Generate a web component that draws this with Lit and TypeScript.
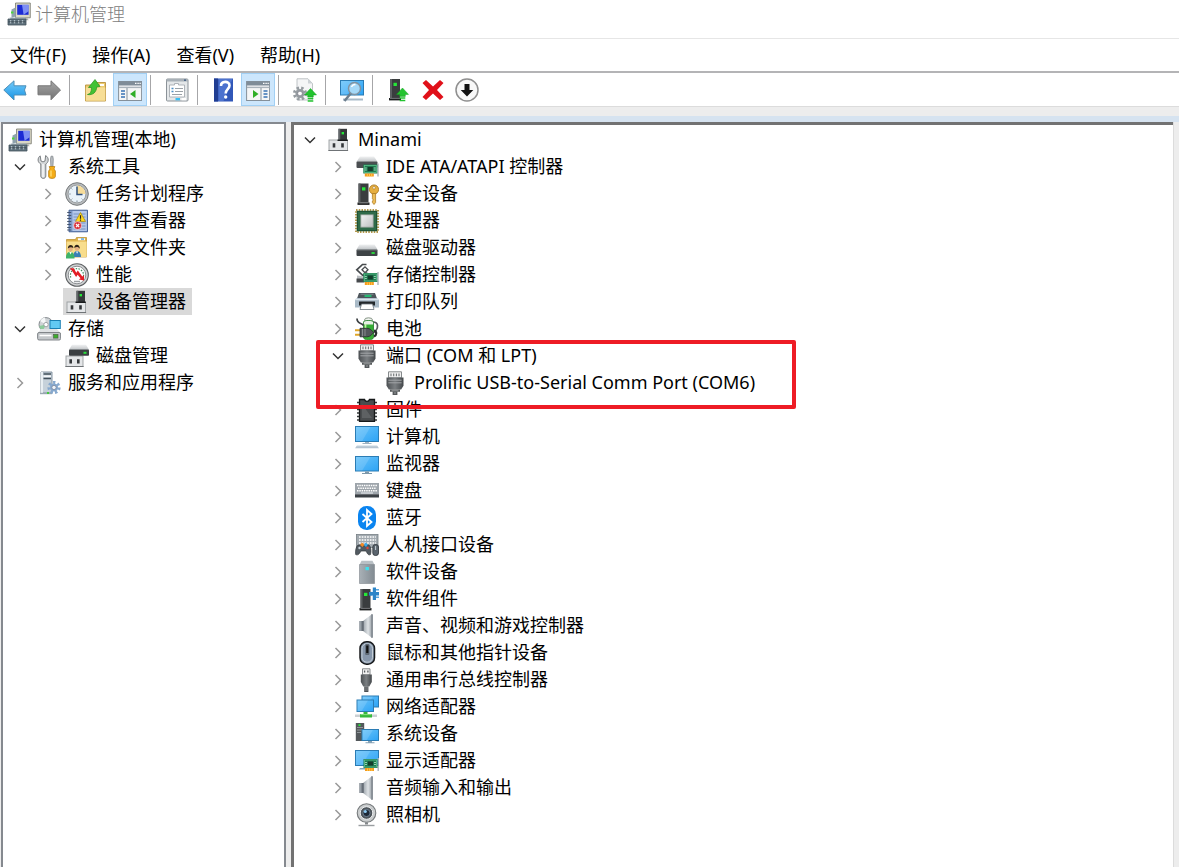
import { LitElement, html, svg, css, nothing } from "lit";
import type { TemplateResult } from "lit";
import { customElement, state } from "lit/decorators.js";
import { classMap } from "lit/directives/class-map.js";

interface TreeNode {
  label: string;
  icon: string;
  open?: boolean;
  selected?: boolean;
  marked?: boolean;
  expandable?: boolean;
  children?: TreeNode[];
}

/* ---------- shared icon parts ---------- */

const screen = (x: number, y: number, w: number, h: number) => svg`
  <rect x=${x} y=${y} width=${w} height=${h} fill="#2b7cb4"/>
  <rect x=${x + 1} y=${y + 1} width=${w - 2} height=${h - 2} fill="url(#sky)"/>
  <path d="M${x + 1} ${y + 1}h${w * 0.6}L${x + w * 0.3} ${y + h - 1}H${x + 1}z" fill="#fff" opacity=".14"/>`;

const board = (x: number, y: number) => svg`
  <path d="M${x + 14} ${y - 1}h1.4v13h-1.4z" fill="#aab4bb"/>
  <rect x=${x} y=${y} width="14" height="9" fill="#1f7a50"/>
  <rect x=${x + 1} y=${y + 1} width="12" height="7" fill="none" stroke="#5cc28c" stroke-width=".8"/>
  <rect x=${x + 4.5} y=${y + 2.5} width="5" height="4" fill="#143c2c"/>
  <path d="M${x + 1.5} ${y + 3.5}h2M${x + 1.5} ${y + 5.5}h2M${x + 10.5} ${y + 3.5}h2M${x + 10.5} ${y + 5.5}h2" stroke="#b5e6c9" stroke-width=".8"/>
  <path d="M${x + 1.5} ${y + 9}h9v3h-9z" fill="#f59a1b"/>
  <path d="M${x + 4} ${y + 9.5}v2.5M${x + 6.2} ${y + 9.5}v2.5M${x + 8.4} ${y + 9.5}v2.5" stroke="#ffd45c" stroke-width=".8"/>`;

const tower = (x: number, y: number) => svg`
  <path d="M${x + 1} ${y}h10v19H${x + 1}z" fill="#3a3d3f"/>
  <path d="M${x + 1} ${y}h2v19h-2z" fill="#5c6062"/>
  <path d="M${x} ${y + 19}h12v2.4H${x}z" fill="#1c1e1f"/>
  <path d="M${x + 1} ${y + 19.4}h10" stroke="#8d9193" stroke-width=".8"/>
  <rect x=${x + 4.5} y=${y + 3.8} width="3.4" height="3.2" fill="#25e838"/>`;

const disk = (y: number) => svg`
  <path d="M4.5 ${y}h15l3 5h-21z" fill="url(#silver)"/>
  <rect x="1.5" y=${y + 5} width="21" height="6.4" rx="1" fill="#3e4346"/>
  <path d="M1.8 ${y + 5.4}h20.4" stroke="#85898c" stroke-width=".9"/>
  <rect x="16.5" y=${y + 7.6} width="3.2" height="1.8" fill="#29e23c"/>`;

const bracket = (x: number, y: number, w: number, h: number) => svg`
  <rect x=${x} y=${y} width=${w} height=${h} fill="#e4e6e8" stroke="#9a9ea1" stroke-width=".9"/>
  <path d="M${x + w * 0.2} ${y + 3.2}h2.6v4.4h-2.6zM${x + w * 0.8 - 2.6} ${y + 3.2}h2.6v4.4h-2.6z" fill="#34373a"/>
  <path d="M${x - 0.6} ${y + h}h${w + 1.2}" stroke="#6f7376" stroke-width="1"/>`;

const serial = svg`
  <path d="M5.5 .8h13v6h-13z" fill="#f1f1f1" stroke="#85898b" stroke-width="1"/>
  <path d="M8 2.6v2.6M10.7 2.6v2.6M13.4 2.6v2.6M16 2.6v2.6" stroke="#707476" stroke-width="1.1"/>
  <path d="M3.5 6.4h17v8.4l-2.4 3.8H5.9l-2.4-3.8z" fill="url(#dark)"/>
  <path d="M5.4 9.2h13.2M5.4 11.8h13.2" stroke="#a3a6a8" stroke-width="1"/>
  <path d="M7 18.6h10v2.2H7zM9.6 20.8h4.8V24H9.6z" fill="#54585a"/>
  <path d="M8.6 19.8h6.8M11 22h2" stroke="#adb0b2" stroke-width=".8"/>`;

const greenArrow = (x: number, y: number) => svg`
  <path d="M${x} ${y}l6 6.4h-3.2v2H${x - 2.8}v-2H${x - 6}z" fill="#23c32f" stroke="#13a31f" stroke-width=".5"/>
  <path d="M${x - 2.8} ${y + 10}h5.6M${x - 2.8} ${y + 12.4}h5.6" stroke="#23c32f" stroke-width="1.5"/>`;

const gear = (x: number, y: number, r: number, fill: string, hole: string) => svg`
  <circle cx=${x} cy=${y} r=${r} fill="none" stroke=${fill} stroke-width="3.2" stroke-dasharray="2.3 2.1"/>
  <circle cx=${x} cy=${y} r=${r - 1} fill=${fill}/>
  <circle cx=${x} cy=${y} r=${r * 0.42} fill=${hole} stroke="#667" stroke-width=".5"/>`;

const speaker = svg`
  <path d="M4.5 7h4.5v10H4.500z" fill="#6a737b"/>
  <path d="M4.5 7h2v10h-2z" fill="#99a1a8"/>
  <path d="M8 7L16.500 .5v23L8 17z" fill="url(#cone)"/>
  <path d="M16 .3h2v23.400h-2z" fill="#8b9299"/>
  <path d="M8.300 7v10" stroke="#59616a" stroke-width=".8"/>`;

const computer = svg`
  <path d="M8.5 1h14.8v14.8H8.5z" fill="#d9d7c5" stroke="#77786f" stroke-width=".8"/>
  <path d="M10.2 2.8h11.4v10H10.2z" fill="#1c2bd4"/>
  <path d="M15 2.8h6.6v6.4l-5 3.6z" fill="#9fb2ff" opacity=".75"/>
  <path d="M4.5 7.5l4-2v9l-4 1.5z" fill="#8fa2ad"/>
  <path d="M4 9.5h2.4v2H4z" fill="#4bd63c"/>
  <path d="M9.5 15.8h10.6l1.6 2.4H8z" fill="#b6b8ae"/>
  <path d="M2.5 15.5h15l3 2H4z" fill="#a9bac3"/>
  <path d="M1 17h18v6H1z" fill="#60727d" stroke="#43525b" stroke-width=".8"/>
  <path d="M3.6 18.2v3M7.5 18.2v3M11.6 18.2v3M15.5 18.2v3" stroke="#c9d6dd" stroke-width="1.3"/>
  <path d="M1.4 19.8h17" stroke="#33414a" stroke-width=".8"/>`;

const windowFrame = svg`
  <rect x=".6" y="3.5" width="23" height="19" fill="#f5f6f7" stroke="#85909a" stroke-width="1"/>
  <path d="M.6 3.5h23v4H.6z" fill="#7f8c98"/>
  <path d="M17 5.4h1.5M19.4 5.4h1.4M21.5 5.4h1.3" stroke="#fff" stroke-width="1.3"/>
  <path d="M1 9.4h22.4" stroke="#aab3bb" stroke-width="1.4"/>`;

/* ---------- icons, all on a 24 by 24 grid ---------- */

const icons: Record<string, TemplateResult> = {
  computer,
  tools: svg`
    <path d="M3.200 .9L4 6l2 .9L8 6l.6-5.400c1.900 1 2.800 2.800 2.600 4.700-.2 1.800-1.200 3-2.400 3.700v12c0 3.200-5 3.200-5 0V9C2.400 8.300 1.200 7 1.100 5.200 1 3.400 1.800 1.700 3.200 .9z" fill="#d4d7d9" stroke="#6e7376" stroke-width=".9"/>
    <path d="M6 9v13" stroke="#fff" stroke-width="1.200"/>
    <path d="M14 1.200h1.800l.5 3-.4 8h-2l-.4-8z" fill="#b8bcc0" stroke="#7d8286" stroke-width=".7"/>
    <path d="M12.200 11.500h5.600l-.8 2.500 1.400 2v5.500c0 2.600-6.800 2.600-6.800 0V16l1.400-2z" fill="#f5ad18" stroke="#b67808" stroke-width=".7"/>
    <path d="M14 15.500v6" stroke="#ffe07a" stroke-width="1.300"/>`,
  clock: svg`
    <circle cx="12" cy="12" r="11.300" fill="#b8bbbd" stroke="#74787a" stroke-width="1"/>
    <circle cx="12" cy="12" r="8.900" fill="#eaf3fa" stroke="#8b8f92" stroke-width=".8"/>
    <path d="M12 12V3.600A8.400 8.400 0 0 1 20.400 12z" fill="#f6dc9a"/>
    <path d="M12 4.500V12.500H17.500" fill="none" stroke="#31517c" stroke-width="1.500"/>
    <path d="M12 18.500v1.500M4.200 12h1.500M6.500 6.500l.8.8M6.500 17.500l.8-.8M17.500 17.500l-.8-.8" stroke="#7e8a94" stroke-width="1"/>`,
  eventlog: svg`
    <path d="M4 1.200h18.500v21.600H4z" fill="#7f9ac9" stroke="#3c5a92" stroke-width=".9"/>
    <path d="M7.500 2h14.300v20H7.500z" fill="#b5c8ea"/>
    <path d="M8.500 5h12M8.500 8h12M8.500 11h12M8.500 14h12M8.500 17h12M8.500 20h12" stroke="#6885bb" stroke-width=".8"/>
    <path d="M2.200 3.500h4M2.200 6.500h4M2.200 9.500h4M2.200 12.500h4M2.200 15.500h4M2.200 18.500h4M2.200 21h4" stroke="#44546e" stroke-width="1.200"/>
    <path d="M15.500 3.500l5 9h-10z" fill="#ffd91f" stroke="#ab8600" stroke-width=".7"/>
    <path d="M15.500 6.300v3.400M15.500 10.400v1.300" stroke="#222" stroke-width="1.200"/>
    <circle cx="12.600" cy="16.600" r="4" fill="#d8303a" stroke="#fff" stroke-width=".6"/>
    <path d="M11 15l3.200 3.200M14.200 15L11 18.200" stroke="#fff" stroke-width="1.200"/>`,
  sharedfolder: svg`
    <path d="M1.500 3.500h9l1-2h10V21h-20z" fill="#dfb24a" stroke="#b98a25" stroke-width=".7"/>
    <path d="M1.500 5.500h20.200V21H1.500z" fill="#f8dd8c"/>
    <path d="M13 2.300h7v2h-7z" fill="#fff"/><path d="M16 2.300h3v1.500h-3z" fill="#5aa6e0"/>
    <circle cx="5.500" cy="13" r="2.400" fill="#e5b184"/><path d="M2.800 12.500c0-4.500 5.600-4.500 5.600-.3-1.500-1.200-3.600-1.200-5.600.3z" fill="#2d2218"/>
    <circle cx="12" cy="12.500" r="2.400" fill="#e5b184"/><path d="M9.300 12c0-4.500 5.600-4.500 5.600 1-1.500-2.500-3.600-2.500-5.600-1z" fill="#2d2218"/>
    <path d="M8 21c0-8 8-8 8 0z" fill="#3a7fb5"/>
    <path d="M1 21c.3-7 8-7 8.500 0v1.500H1z" fill="#3fb36a"/>
    <path d="M4.300 16l1.200 2.600L6.800 16zM11 15.500l1.100 2.300 1.100-2.300z" fill="#fff"/>`,
  performance: svg`
    <circle cx="12" cy="12" r="11.300" fill="#cfd1d2" stroke="#5e6163" stroke-width="1.100"/>
    <circle cx="12" cy="12" r="8.800" fill="#fff" stroke="#8b8f92" stroke-width="1"/>
    <path d="M5.800 14.500A6.600 6.600 0 1 1 18.200 14.500" fill="none" stroke="#3f8f5e" stroke-width="1.200" stroke-dasharray="1.500 1.300"/>
    <path d="M4.800 5.200h4l2.500 4.500 1.500-2.200 4.500 6 1.700-1.200v5.200l-5.200-.9 1.700-1.400-2.900-3.400-1.500 2.200L7.200 8z" fill="#e31e25"/>
    <path d="M9 18.500h6" stroke="#9da1a4" stroke-width="1.400"/>`,
  devmgr: svg`
    ${bracket(2, 12, 18.500, 10.500)}
    <path d="M11.500 .8h8.500V12h-8.500z" fill="#35383a"/>
    <path d="M11.500 .8h1.800V12h-1.800z" fill="#63676a"/>
    <rect x="14.600" y="4" width="2.400" height="2.400" fill="#25e838"/>
    <path d="M10.500 12.300h10.300" stroke="#191b1c" stroke-width="1.400"/>`,
  storage: svg`
    <circle cx="9" cy="7.600" r="7" fill="#cfd3d6" stroke="#7b8084" stroke-width=".9"/>
    <path d="M9 7.600L3 4a7 7 0 0 1 5-3.400z" fill="#f5f7f8"/><path d="M9 7.600L2.200 9a7 7 0 0 0 3.600 4.800z" fill="#8ccb9b"/>
    <circle cx="9" cy="7.600" r="2.200" fill="#fff" stroke="#8d9296" stroke-width=".8"/>
    <rect x="12.500" y="3" width="11.300" height="9" fill="#1a7fb3"/><rect x="13.500" y="4" width="9.300" height="7" fill="#62c9f3"/>
    <path d="M4 12h16l3.500 4H.8z" fill="#dfe2e4"/>
    <rect x=".6" y="15.500" width="23" height="7.500" rx="1.500" fill="#c3c7ca" stroke="#777c80" stroke-width=".9"/>
    <path d="M2.500 18.500h12" stroke="#fff" stroke-width="1.500"/>
    <rect x="16.500" y="17.300" width="4.500" height="3.800" fill="#3cae2e" stroke="#4d5c49" stroke-width=".6"/>`,
  diskmgmt: svg`
    ${bracket(1, 12, 17, 10.500)}
    <path d="M7 .8h14l3 5H4z" fill="url(#silver)"/>
    <rect x="4" y="5.600" width="20" height="6.200" rx=".8" fill="#3b3f42"/>
    <rect x="18.500" y="7.800" width="3" height="2" fill="#29e23c"/>`,
  services: svg`
    <path d="M4 1h11v21H4z" fill="#c6d1da" stroke="#7b8b98" stroke-width=".9"/>
    <path d="M4 1h2v21H4z" fill="#e9eff3"/>
    <path d="M6.500 3h7.500M6.500 7.500h7.500" stroke="#42505b" stroke-width="1.300"/>
    <path d="M6.500 5.200h7.500" stroke="#fff" stroke-width="1.300"/>
    <path d="M3 22.500h12" stroke="#9aa7b1" stroke-width="1.400"/>
    <rect x="10" y="21" width="2" height="2" fill="#46c840"/>
    ${gear(17, 16.500, 5, "#87a9ce", "#eef4fa")}`,
  ide: svg`
    <path d="M5 1.600h14l3.500 5.200h-21z" fill="url(#silver)"/>
    <rect x="1.500" y="6.500" width="21" height="6.500" rx="1" fill="#4a4e51"/>
    ${board(8.300, 9.500)}`,
  security: svg`
    ${tower(2.500, 1.500)}
    <circle cx="19" cy="7.500" r="4.600" fill="#e6ae3f" stroke="#a5721a" stroke-width=".8"/>
    <circle cx="19" cy="5.800" r="1.300" fill="#fff" stroke="#a5721a" stroke-width=".6"/>
    <path d="M17.400 11.500h3.200v9l-1.600 2-1.600-2v-1.500l1-1-1-1.200v-1.500z" fill="#edbc55" stroke="#a5721a" stroke-width=".7"/>`,
  cpu: svg`
    <rect x="1" y="1" width="22" height="22" fill="none" stroke="#b5974a" stroke-width="2" stroke-dasharray="1.500 1.250"/>
    <rect x="1.800" y="1.800" width="20.400" height="20.400" fill="#2f6b49"/>
    <rect x="2.400" y="2.400" width="19.200" height="19.200" fill="none" stroke="#1f5135" stroke-width="1"/>
    <rect x="5.800" y="5.800" width="12.400" height="12.400" fill="url(#chip)" stroke="#8a9a90" stroke-width=".8"/>`,
  disk: disk(8.500),
  storagectl: svg`
    <path d="M11.500 1.500H7.500L1.800 6.800l5.700 5.400h4v-3" fill="none" stroke="#474b4e" stroke-width="1.700"/>
    <path d="M7 6.800l3-3 3 3-3 3z" fill="#fff" stroke="#474b4e" stroke-width="1.300"/>
    <path d="M2 12.500l8 1v4H2z" fill="#b9bdc0"/><path d="M1.500 15.500h8v4h-8z" fill="#45494c"/>
    ${board(8.300, 10)}`,
  printer: svg`
    <path d="M4 3h16l2 5.500H2z" fill="#4d555b"/><path d="M5.500 4.300h13" stroke="#747d84" stroke-width="1.300"/>
    <rect x="9.500" y="4.800" width="7" height="2.200" fill="#28b772"/>
    <path d="M2 8h20l2 2v7.500H0V10z" fill="#a9bac7"/>
    <path d="M.3 9.500h23.400" stroke="#dbe5ec" stroke-width="1.400"/>
    <path d="M4 11.500h16v4H4z" fill="#23272a"/>
    <path d="M6.500 14h11l1.500 5.500H5z" fill="#fff" stroke="#6b747b" stroke-width=".8"/>`,
  battery: svg`
    <path d="M18 5c6 0 5 6 3 8.500l-3 3" fill="none" stroke="#565b5f" stroke-width="1.700"/>
    <path d="M19 13.500c3 1 3 4.500 0 6" fill="none" stroke="#292c2e" stroke-width="2.200"/>
    <ellipse cx="13.500" cy="3" rx="4" ry="2.200" fill="#f0f4ef" stroke="#7a8a7a" stroke-width=".9"/>
    <path d="M8.500 5c0-2 10-2 10 0v15.500c0 3-10 3-10 0z" fill="#35ad35" stroke="#23782c" stroke-width=".8"/>
    <path d="M8.900 5c0-1.500 9.200-1.500 9.200 0v2.500H8.900z" fill="#e8efe6"/>
    <path d="M10.500 7v5" stroke="#c0f4a4" stroke-width="1.700"/>
    <path d="M2 1.500c0 6 5 4 6.500 7" fill="none" stroke="#3b3f42" stroke-width="1.700"/>
    <path d="M0 13.300h5.500M0 17.800h5.500" stroke="#e0a62a" stroke-width="2"/>
    <path d="M5 11.300h6.500c4.500 0 5.500 3 7 4.200-1.500 1.300-2.500 4.300-7 4.300H5z" fill="#52575a" stroke="#282b2d" stroke-width=".8"/>
    <path d="M7.500 12v7M10 12v7" stroke="#8c9194" stroke-width=".9"/>`,
  port: serial,
  firmware: svg`
    <path d="M2 4.500h20M2 8h20M2 11.500h20M2 15h20M2 18.500h20M2 22h20" stroke="#34383a" stroke-width="1.600"/>
    <path d="M4.500 1.500h5c.6 2.600 4.400 2.600 5 0h5v22h-15z" fill="#4a4d4f" stroke="#161819" stroke-width="1.300"/>
    <path d="M7 6l10 14H7z" fill="#6c7072" opacity=".6"/>`,
  pc: svg`
    ${screen(0, 1, 24, 16)}
    <path d="M10 17h4v1.300h-4zM7.500 18h9v1h-9z" fill="#9fb3c2"/>
    <path d="M2 20.500h20l2 2.800H0z" fill="#b5c4d1"/><path d="M2 20.700h20" stroke="#e4ecf2" stroke-width="1"/>`,
  monitor: svg`
    ${screen(0, 4, 24, 15.500)}
    <path d="M10 19.500h4v1.600h-4zM7 21h10v1H7z" fill="#7e98aa"/>`,
  keyboard: svg`
    <rect x="0" y="4" width="24" height="11.500" fill="#9ea5ab"/>
    <path d="M0 15.300h24v3.200H0z" fill="#3b4045"/>
    <path d="M2 6.500h20M3 9.200h18.500M2 11.800h20" stroke="#fff" stroke-width="1.400" stroke-dasharray="1.500 .8"/>
    <path d="M6 14h12" stroke="#e6eaed" stroke-width="1.100"/>`,
  bluetooth: svg`
    <rect x="3" y="0" width="18" height="24" rx="8.500" fill="#0a84f0"/>
    <path d="M7.500 8l9 8-4.500 4V4l4.500 4-9 8" fill="none" stroke="#fff" stroke-width="1.800"/>`,
  hid: svg`
    <rect x="1.500" y="1.500" width="21.500" height="13" fill="#a2aab0" stroke="#777f86" stroke-width=".8"/>
    <path d="M4 4h17M4 7h17M4 10h17" stroke="#fff" stroke-width="1.600" stroke-dasharray="1.700 1"/>
    <path d="M3 12h4c1.500 1 3 1 4.500 0h2.500c2 2 2.500 6 1.500 9.500-2.500 1.500-3.500-2-4.500-3.500H6c-1 1.500-2.500 5-5.300 3.500C.2 18 .8 14 3 12z" fill="#525a61" stroke="#30363b" stroke-width=".7"/>
    <circle cx="4.500" cy="15" r="1.200" fill="#c6d0d7"/>
    <path d="M7 9.500l2.500 2-2 2.500-2.500-2z" fill="#f28a24"/><path d="M10.500 9.500l2.500 2-2 2.500-2-2z" fill="#36a9ec"/><circle cx="12.500" cy="15" r="1.200" fill="#de4638"/>
    <rect x="17.800" y="11.500" width="5.700" height="11" rx="2.500" fill="#5b656e" stroke="#2c3237" stroke-width=".8"/>
    <path d="M20.600 13v4" stroke="#c6d0d7" stroke-width="1"/>`,
  softdev: svg`
    <path d="M6.500 .8h11l2 4H4.500z" fill="#b9c0c5"/>
    <path d="M4.500 4.500h15v19h-15z" fill="url(#steel)" stroke="#7f878d" stroke-width=".6"/>
    <rect x="10.500" y="7" width="3.400" height="3.200" fill="#3fe0ee"/>`,
  softcomp: svg`
    ${tower(4.500, 2)}
    <path d="M17.800 .5h3.200V5h3v3.500h-3V13h-3.200V8.500h-3.800V5h3.800z" fill="#2d85c8"/>
    <circle cx="16" cy="6.700" r="1.900" fill="#2d85c8"/><path d="M21 2h3v1.500h-3zM21 9.500h3V11h-3z" fill="#5aa5dc"/>`,
  speaker,
  mouse: svg`
    <rect x="5" y=".8" width="14.500" height="22.400" rx="6.500" fill="#8797ab" stroke="#17191b" stroke-width="1.500"/>
    <rect x="7" y="2.800" width="10.500" height="18.400" rx="4.800" fill="none" stroke="#c4ced7" stroke-width="1"/>
    <rect x="10.200" y="3" width="4.200" height="11" rx="1" fill="#5c6772"/>
    <rect x="11.200" y="4.500" width="2.200" height="7.500" fill="#111"/>`,
  usb: svg`
    <path d="M7.500 .8h7.500v6H7.500z" fill="#f2f2f2" stroke="#777b7e" stroke-width=".9"/>
    <path d="M9.600 2.600v2M12.900 2.600v2" stroke="#55595c" stroke-width="1.300"/>
    <path d="M5.800 6.500h11v7.500l-2.500 4.500H8.300L5.800 14z" fill="url(#dark)"/>
    <path d="M9.200 18.500h4.200V24H9.200z" fill="#4b4f52"/><path d="M9.500 20h3.600M9.500 22h3.600" stroke="#999da0" stroke-width=".8"/>`,
  network: svg`
    ${screen(6.500, 0.500, 17.500, 12)}
    ${screen(1.500, 4.500, 17.500, 12.500)}
    <path d="M0 19.500h22v2.500H0z" fill="#cbd0d3"/>
    <path d="M8.500 17h4v2h-4zM5 19h12v3.500H5z" fill="#35b83c"/><path d="M5.500 19.600h11" stroke="#86e07e" stroke-width="1"/>`,
  system: svg`
    <path d="M.8 1h8.400v18H.8z" fill="#53585b"/><path d="M2 5.500h6M2 8h6M2 10.500h4" stroke="#90969a" stroke-width="1"/>
    <rect x="3.500" y="2.200" width="2" height="1.800" fill="#28e83a"/>
    ${screen(6.500, 7, 17.500, 12)}
    <path d="M13 19h4v1.500h-4zM10.500 20.300h9v1h-9z" fill="#86a2b6"/>`,
  display: svg`
    ${screen(0, 1, 24, 16)}
    <path d="M5 19h5v1.500H4z" fill="#86a2b6"/>
    ${board(8.500, 10)}`,
  camera: svg`
    <circle cx="11.500" cy="10" r="9.300" fill="#c9cccd" stroke="#75797b" stroke-width="1.100"/>
    <circle cx="11.500" cy="10" r="6.300" fill="#4d545a" stroke="#eceeef" stroke-width="1"/>
    <circle cx="11.500" cy="10" r="3.600" fill="#1d2937" stroke="#7b8ea2" stroke-width=".8"/>
    <circle cx="10.300" cy="8.600" r="1.500" fill="#8ccaf2"/>
    <path d="M10 19.300h3v2.200h-3z" fill="#83878a"/><path d="M3.500 22.500h16" stroke="#999da0" stroke-width="1.400"/>`,

  back: svg`<path d="M.8 12L11 2.800v5h12l-1.500 4.200 1.500 5H11v5z" fill="url(#blueArrow)" stroke="#4f8fb8" stroke-width="1"/>`,
  forward: svg`<path d="M23.500 12L14 2.800v5H1v9h13v5z" fill="url(#grayArrow)" stroke="#777" stroke-width="1"/>`,
  up: svg`
    <path d="M1.500 7h8l1.500-2.500h10.500V23h-20z" fill="#edcb72" stroke="#b9923c" stroke-width=".9"/>
    <path d="M1.800 9.500h19.500V22.700H1.800z" fill="#f7de96"/><path d="M16 6h4v2h-4z" fill="#fff"/>
    <path d="M3.500 16.500c3-.5 4-3 4-7H4.500L11 1.500l5 7-3.300.5C12.500 14 9 17.500 3.500 16.500z" fill="#42c234" stroke="#279420" stroke-width=".7"/>`,
  treepane: svg`
    ${windowFrame}
    <path d="M9 10v12.500" stroke="#85909a" stroke-width="1"/>
    <path d="M3 13h4M3 16h4M3 19h4" stroke="#3973b5" stroke-width="1.500"/>
    <path d="M17.500 12v8L12 16z" fill="#2fae27"/>`,
  actionpane: svg`
    ${windowFrame}
    <path d="M15 10v12.500" stroke="#85909a" stroke-width="1"/>
    <path d="M17.500 13h4M17.500 16h4M17.500 19h4" stroke="#3973b5" stroke-width="1.500"/>
    <path d="M7 12v8l5.500-4z" fill="#2fae27"/>`,
  properties: svg`
    <rect x="1.500" y="1" width="21.500" height="22" rx="1" fill="#e4e7e9" stroke="#8b9298" stroke-width="1"/>
    <path d="M1.500 1h21.500v2.500H1.500z" fill="#a8b0b7"/><path d="M19 2.200h2" stroke="#30507a" stroke-width="1.300"/>
    <path d="M4.500 7h5V5.500h4V7h6v12h-15z" fill="#fff" stroke="#a7adb2" stroke-width=".9"/>
    <path d="M6.500 10.500h2M6.500 13.500h2" stroke="#4c8dc4" stroke-width="1.300"/><path d="M10 10.500h8M10 13.500h8M7 16.500h10" stroke="#9aa1a7" stroke-width="1.100"/>
    <path d="M10.500 20h4.500v2.300h-4.500z" fill="#39c0f4"/><path d="M16.500 20h4.500v2.300h-4.500z" fill="#fff"/>`,
  help: svg`
    <path d="M2 .5h19v23H2z" fill="#3157b8"/><path d="M2 .5h4v23H2z" fill="#203d92"/>
    <path d="M6.500 1h14l-9 22h-5z" fill="#5f83dc" opacity=".6"/>
    <path d="M9 8c0-5.500 8.500-5.300 8.500-.6 0 3.600-3.800 3.800-3.800 8" fill="none" stroke="#fff" stroke-width="2.600"/><circle cx="13.700" cy="19" r="1.700" fill="#fff"/>`,
  scan: svg`
    <path d="M4 .8h11l4.500 4.700V22H4z" fill="#f4f5f6" stroke="#b8bdc1" stroke-width=".9"/><path d="M15 .8v4.700h4.500z" fill="#cdd2d6"/>
    ${gear(7, 15.500, 5.500, "#969ca1", "#fff")}
    ${greenArrow(17.500, 10.500)}`,
  scanpc: svg`
    ${screen(0, 2, 24, 15.500)}
    <path d="M3 21.500h20" stroke="#a9bac8" stroke-width="2"/>
    <path d="M11 15l-6.500 8" stroke="#6c7e8d" stroke-width="2.400"/>
    <circle cx="14.500" cy="10.500" r="6" fill="#a5d9f8" stroke="#8193a1" stroke-width="1.500"/><path d="M11.500 9a4 4 0 0 1 4-2.500" fill="none" stroke="#fff" stroke-width="1.300"/>`,
  update: svg`${tower(2, 1)}${greenArrow(15.500, 10)}`,
  remove: svg`<path d="M5 2l7 6.500L19 2l3.500 3-6.500 7 6.500 7-3.500 3-7-6.500L5 22l-3.500-3L8 12 1.500 5z" fill="#e01019"/>`,
  disable: svg`
    <circle cx="12" cy="12" r="11" fill="#f8f8f8" stroke="#8f8f8f" stroke-width="1.500"/>
    <path d="M9.500 6h5v6h3.800L12 18.500 5.700 12h3.800z" fill="#111"/>`,
};

const consoleTree: TreeNode[] = [
  {
    label: "计算机管理(本地)", icon: "computer", open: true,
    children: [
      {
        label: "系统工具", icon: "tools", open: true, expandable: true,
        children: [
          { label: "任务计划程序", icon: "clock", expandable: true },
          { label: "事件查看器", icon: "eventlog", expandable: true },
          { label: "共享文件夹", icon: "sharedfolder", expandable: true },
          { label: "性能", icon: "performance", expandable: true },
          { label: "设备管理器", icon: "devmgr", selected: true },
        ],
      },
      {
        label: "存储", icon: "storage", open: true, expandable: true,
        children: [{ label: "磁盘管理", icon: "diskmgmt" }],
      },
      { label: "服务和应用程序", icon: "services", expandable: true },
    ],
  },
];

const category = (label: string, icon: string): TreeNode => ({ label, icon, expandable: true });

const deviceTree: TreeNode[] = [
  {
    label: "Minami", icon: "devmgr", open: true, expandable: true,
    children: [
      category("IDE ATA/ATAPI 控制器", "ide"),
      category("安全设备", "security"),
      category("处理器", "cpu"),
      category("磁盘驱动器", "disk"),
      category("存储控制器", "storagectl"),
      category("打印队列", "printer"),
      category("电池", "battery"),
      {
        label: "端口 (COM 和 LPT)", icon: "port", open: true, expandable: true, marked: true,
        children: [{ label: "Prolific USB-to-Serial Comm Port (COM6)", icon: "port" }],
      },
      category("固件", "firmware"),
      category("计算机", "pc"),
      category("监视器", "monitor"),
      category("键盘", "keyboard"),
      category("蓝牙", "bluetooth"),
      category("人机接口设备", "hid"),
      category("软件设备", "softdev"),
      category("软件组件", "softcomp"),
      category("声音、视频和游戏控制器", "speaker"),
      category("鼠标和其他指针设备", "mouse"),
      category("通用串行总线控制器", "usb"),
      category("网络适配器", "network"),
      category("系统设备", "system"),
      category("显示适配器", "display"),
      category("音频输入和输出", "speaker"),
      category("照相机", "camera"),
    ],
  },
];

const toolbar: { icon: string; label: string; on?: boolean }[][] = [
  [{ icon: "back", label: "后退" }, { icon: "forward", label: "前进" }],
  [{ icon: "up", label: "上移一级" }, { icon: "treepane", label: "显示/隐藏控制台树", on: true }],
  [{ icon: "properties", label: "属性" }],
  [{ icon: "help", label: "帮助" }, { icon: "actionpane", label: "显示/隐藏操作窗格", on: true }],
  [{ icon: "scan", label: "更新驱动程序" }],
  [{ icon: "scanpc", label: "扫描检测硬件改动" }],
  [
    { icon: "update", label: "更新设备" },
    { icon: "remove", label: "卸载设备" },
    { icon: "disable", label: "禁用设备" },
  ],
];

const menus = ["文件(F)", "操作(A)", "查看(V)", "帮助(H)"];

@customElement("app-root")
export class AppRoot extends LitElement {
  @state() private selected: TreeNode | null = consoleTree[0].children![0].children![4];

  static styles = css`
    :host {
      display: flex;
      flex-direction: column;
      height: 100vh;
      overflow: hidden;
      background: #fff;
      color: #000;
      font: 18px/27px "Noto Sans", "Noto Sans CJK SC", sans-serif;
    }
    button {
      font: inherit;
      color: inherit;
      background: none;
      border: 0;
      padding: 0;
      margin: 0;
    }
    .defs { position: absolute; width: 0; height: 0; }
    .icon { display: block; flex: none; width: 24px; height: 24px; }

    .title {
      display: flex;
      align-items: center;
      gap: 4px;
      padding: 0 7px 10px;
      border-bottom: 1px solid #e6e6e6;
    }
    .title h1 { margin: 0; font-size: 18px; line-height: 28px; font-weight: 300; color: #808080; }

    .menubar {
      display: flex;
      gap: 26px;
      padding: 3px 10px 2px;
      border-bottom: 2px solid #b4b4b6;
    }

    .toolbar {
      display: flex;
      align-items: center;
      margin-left: -2px;
      border-bottom: 1px solid #dcdcdc;
    }
    .group { display: flex; }
    .group + .group::before {
      content: "";
      width: 1px;
      margin: 2px 9px 1px 3px;
      background: #a6a6a8;
    }
    .tool {
      display: grid;
      place-items: center;
      box-sizing: border-box;
      width: 34px;
      height: 33px;
      padding-top: 1px;
      border: 1px solid transparent;
    }
    .tool.on { background: #cce6fc; border-color: #a2d0f4; }

    .body {
      flex: 1;
      min-height: 0;
      display: flex;
      gap: 5px;
      padding: 6px 6px 0 1px;
      margin-top: 9px;
      background: linear-gradient(#d6e3f0 6px, #ededed 6px);
      box-shadow: 0 -9px #ededed;
    }
    .pane {
      box-sizing: border-box;
      background: #fff;
      overflow: hidden;
    }
    .console {
      flex: 0 0 285px;
      border: 2px solid #85898f;
      border-bottom: 0;
      padding-top: 2px;
    }
    .devices {
      flex: 1;
      min-width: 0;
      border: solid #727272;
      border-width: 3px 0 0 3px;
      padding-top: 1px;
      box-shadow: 1px 0 #dcdcdc;
    }

    ul { list-style: none; margin: 0; padding: 0; }
    ul ul { padding-left: 28px; }
    .console ul ul { padding-left: 6px; }
    .console ul ul ul { padding-left: 28px; }
    .devices > ul { padding-left: 5px; }
    li { position: relative; }
    .row { display: flex; align-items: center; height: 27px; }
    .twisty, .spacer {
      display: grid;
      place-items: center;
      flex: none;
      width: 22px;
      height: 27px;
      margin-right: 6px;
    }
    .root > .row { padding-left: 5px; }
    .twisty svg { width: 12px; height: 12px; fill: none; stroke: #999; stroke-width: 1.5; }
    .twisty.open svg { stroke: #333; }
    .item {
      display: flex;
      align-items: center;
      height: 27px;
      white-space: nowrap;
    }
    .label { padding: 0 6px 0 7px; line-height: 27px; }
    .item.selected { background: #d9d9d9; margin-left: -2px; padding-left: 2px; }

    .mark {
      position: absolute;
      box-sizing: border-box;
      top: -2px;
      left: -11px;
      width: 480px;
      bottom: -13px;
      border: 4px solid #ee1c25;
      border-radius: 2px;
      pointer-events: none;
      z-index: 1;
    }
  `;

  private icon(name: string) {
    return html`<svg class="icon" viewBox="0 0 24 24" aria-hidden="true">${icons[name]}</svg>`;
  }

  private toggle(node: TreeNode) {
    if (!node.children) return;
    node.open = !node.open;
    this.requestUpdate();
  }

  private twisty(node: TreeNode) {
    const d = node.open ? "M1 3.500L6 8.500L11 3.500" : "M3.500 1L8.500 6L3.500 11";
    return html`<button class=${classMap({ twisty: true, open: !!node.open })}
      aria-label=${node.label} @click=${() => this.toggle(node)}>
      <svg viewBox="0 0 12 12" aria-hidden="true"><path d=${d}></path></svg>
    </button>`;
  }

  private branch(node: TreeNode, bare = false): TemplateResult {
    return html`<li class=${classMap({ root: bare })} role="treeitem">
      <div class="row">
        ${node.expandable ? this.twisty(node) : bare ? nothing : html`<span class="spacer"></span>`}
        <button class=${classMap({ item: true, selected: this.selected === node })}
          @click=${() => { this.selected = node; }}>
          ${this.icon(node.icon)}<span class="label">${node.label}</span>
        </button>
      </div>
      ${node.open && node.children
        ? html`<ul role="group">${node.children.map((c) => this.branch(c))}</ul>`
        : nothing}
      ${node.marked ? html`<div class="mark"></div>` : nothing}
    </li>`;
  }

  render() {
    return html`
      <svg class="defs" aria-hidden="true">
        <defs>
          <linearGradient id="sky" x1="0" y1="0" x2="1" y2="1"><stop offset="0" stop-color="#68c3fa"/><stop offset="1" stop-color="#2fa4f5"/></linearGradient>
          <linearGradient id="silver" x1="0" y1="0" x2="0" y2="1"><stop offset="0" stop-color="#f0f1f2"/><stop offset="1" stop-color="#bfc3c6"/></linearGradient>
          <linearGradient id="chip" x1="0" y1="0" x2="1" y2="1"><stop offset="0" stop-color="#f4f4f4"/><stop offset="1" stop-color="#bcbfc0"/></linearGradient>
          <linearGradient id="dark" x1="0" y1="0" x2="1" y2="0"><stop offset="0" stop-color="#4c5053"/><stop offset=".5" stop-color="#7b7f82"/><stop offset="1" stop-color="#43474a"/></linearGradient>
          <linearGradient id="steel" x1="0" y1="0" x2="1" y2="0"><stop offset="0" stop-color="#a8b0b6"/><stop offset="1" stop-color="#828b92"/></linearGradient>
          <linearGradient id="cone" x1="0" y1="0" x2="1" y2="0"><stop offset="0" stop-color="#9aa2a9"/><stop offset=".6" stop-color="#dfe3e6"/><stop offset="1" stop-color="#a2a9af"/></linearGradient>
          <linearGradient id="blueArrow" x1="0" y1="0" x2="0" y2="1"><stop offset="0" stop-color="#74cbfa"/><stop offset="1" stop-color="#1794e4"/></linearGradient>
          <linearGradient id="grayArrow" x1="0" y1="0" x2="0" y2="1"><stop offset="0" stop-color="#a5a5a5"/><stop offset="1" stop-color="#747474"/></linearGradient>
        </defs>
      </svg>
      <header class="title">${this.icon("computer")}<h1>计算机管理</h1></header>
      <nav class="menubar">${menus.map((m) => html`<button>${m}</button>`)}</nav>
      <div class="toolbar" role="toolbar">
        ${toolbar.map((g) => html`<div class="group">
          ${g.map((t) => html`<button class=${classMap({ tool: true, on: !!t.on })} aria-label=${t.label}>${this.icon(t.icon)}</button>`)}
        </div>`)}
      </div>
      <main class="body">
        <section class="pane console"><ul role="tree">${consoleTree.map((n) => this.branch(n, true))}</ul></section>
        <section class="pane devices"><ul role="tree">${deviceTree.map((n) => this.branch(n))}</ul></section>
      </main>
    `;
  }
}
